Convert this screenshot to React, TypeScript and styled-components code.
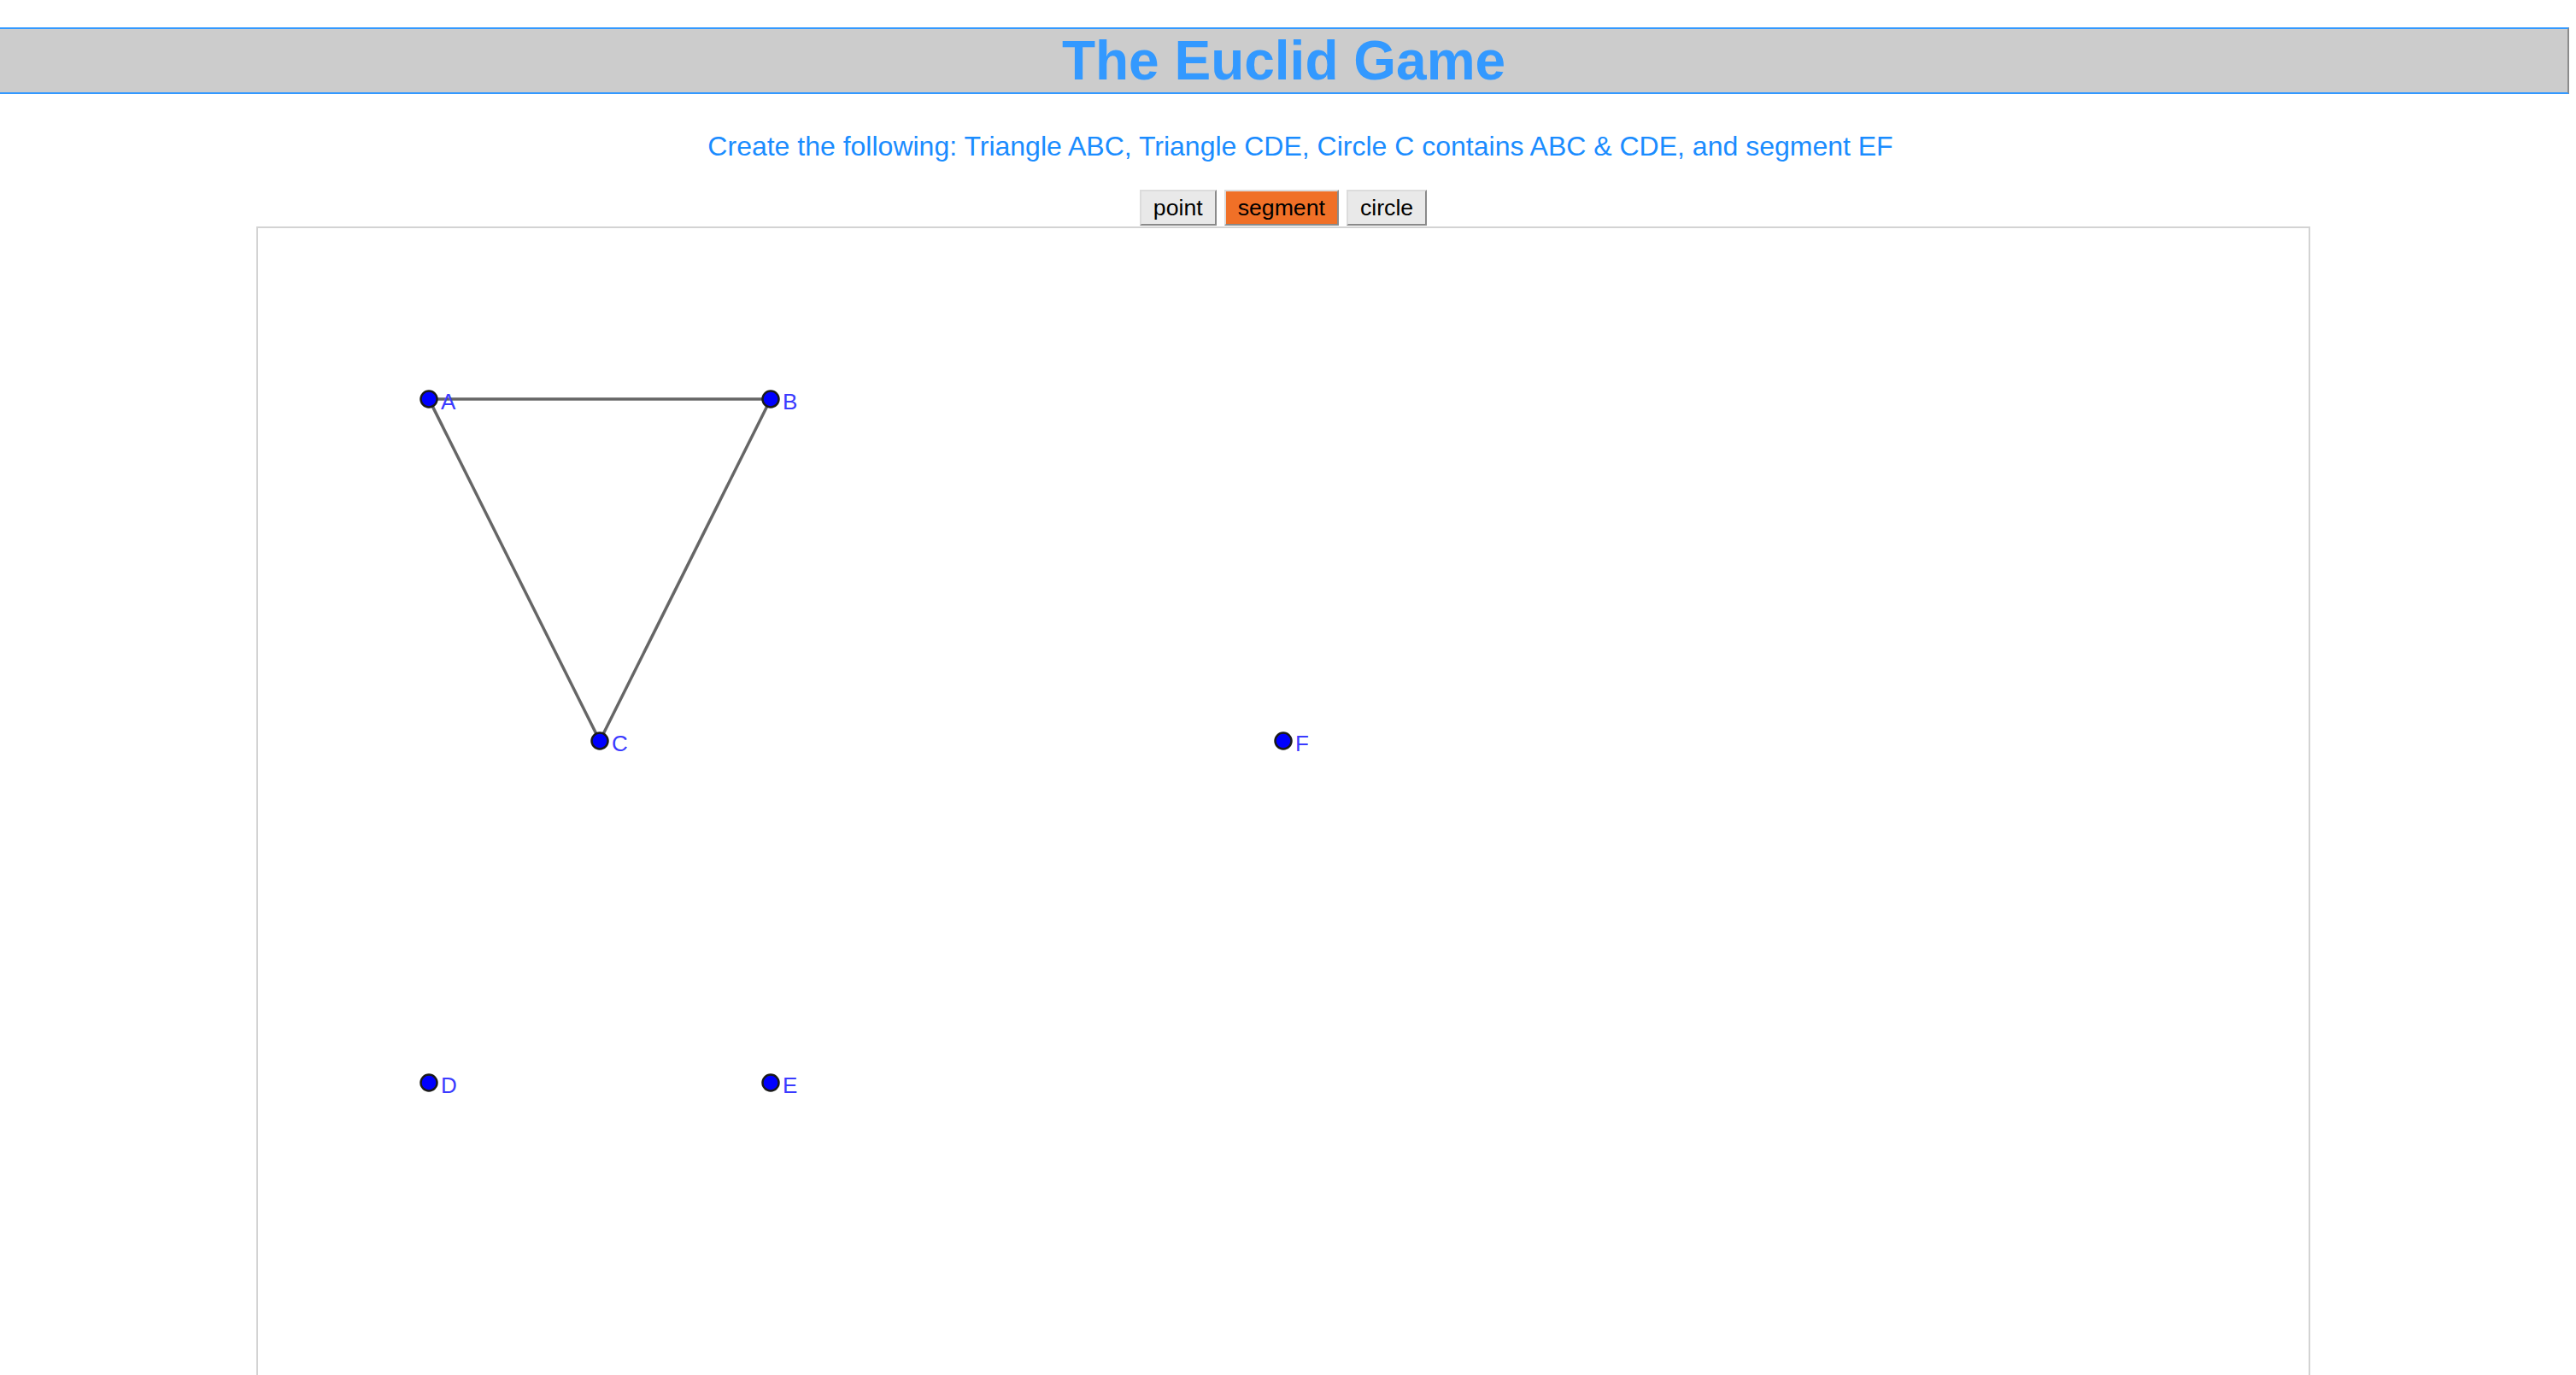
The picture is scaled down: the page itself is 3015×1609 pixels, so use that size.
import React from "react";
import styled, { createGlobalStyle } from "styled-components";

const GlobalStyle = createGlobalStyle`
  html, body {
    margin: 0;
    padding: 0;
    background: #ffffff;
    overflow: hidden;
  }
  body {
    font-family: "Liberation Sans", Arial, sans-serif;
  }
`;

const Page = styled.div`
  width: 3004px;
  padding-top: 32px;
  display: flex;
  flex-direction: column;
  align-items: center;
`;

const Header = styled.h1`
  box-sizing: border-box;
  align-self: flex-start;
  width: 3007px;
  margin: 0;
  background: #cccccc;
  border-top: 2px solid #3399ff;
  border-bottom: 2px solid #3399ff;
  border-right: 2px solid #8c8c8c;
  color: #3399ff;
  font-family: "Liberation Sans", Arial, sans-serif;
  font-weight: bold;
  font-size: 64px;
  line-height: 74px;
  text-align: center;
`;

const Instructions = styled.p`
  margin: 43px 0 0 0;
  padding-left: 40px;
  color: #1a8cff;
  font-size: 32px;
  line-height: 36px;
  text-align: center;
`;

const Toolbar = styled.div`
  display: flex;
  gap: 9px;
  margin-top: 33px;
`;

const ToolButton = styled.button<{ $active?: boolean }>`
  box-sizing: border-box;
  height: 42px;
  padding: 0 14px;
  margin: 0;
  font-family: "Liberation Sans", Arial, sans-serif;
  font-size: 26.67px;
  color: #000000;
  background: ${(p) => (p.$active ? "#f07027" : "#e9e9e9")};
  border-style: solid;
  border-width: 2px;
  border-color: #dcdcdc #8a8a8a #8a8a8a #dcdcdc;
  cursor: pointer;
`;

const Board = styled.div`
  margin-top: 1px;
  width: 2400px;
  height: 1600px;
  border: 2px solid #d3d3d3;
  background: #ffffff;
`;

const Label = styled.text`
  font-family: "Liberation Sans", Arial, sans-serif;
  font-size: 26px;
  fill: #3a3aff;
`;

type Pt = { name: string; x: number; y: number };

const points: Pt[] = [
  { name: "A", x: 200, y: 200 },
  { name: "B", x: 600, y: 200 },
  { name: "C", x: 400, y: 600 },
  { name: "D", x: 200, y: 1000 },
  { name: "E", x: 600, y: 1000 },
  { name: "F", x: 1200, y: 600 },
];

const segments: [string, string][] = [
  ["A", "B"],
  ["B", "C"],
  ["C", "A"],
];

const byName = (n: string) => points.find((p) => p.name === n)!;

export default function App() {
  return (
    <>
      <GlobalStyle />
      <Page>
        <Header>The Euclid Game</Header>
        <Instructions>
          Create the following: Triangle ABC, Triangle CDE, Circle C contains ABC &amp; CDE, and segment EF
        </Instructions>
        <Toolbar>
          <ToolButton>point</ToolButton>
          <ToolButton $active>segment</ToolButton>
          <ToolButton>circle</ToolButton>
        </Toolbar>
        <Board>
          <svg width="2400" height="1600" viewBox="0 0 2400 1600">
            {segments.map(([a, b]) => {
              const p = byName(a);
              const q = byName(b);
              return (
                <line
                  key={a + b}
                  x1={p.x}
                  y1={p.y}
                  x2={q.x}
                  y2={q.y}
                  stroke="#666666"
                  strokeWidth={3.5}
                />
              );
            })}
            {points.map((p) => (
              <g key={p.name}>
                <circle cx={p.x} cy={p.y} r={9.5} fill="#0000ff" stroke="#1a1a1a" strokeWidth={2.5} />
                <Label x={p.x + 14} y={p.y + 12}>
                  {p.name}
                </Label>
              </g>
            ))}
          </svg>
        </Board>
      </Page>
    </>
  );
}
